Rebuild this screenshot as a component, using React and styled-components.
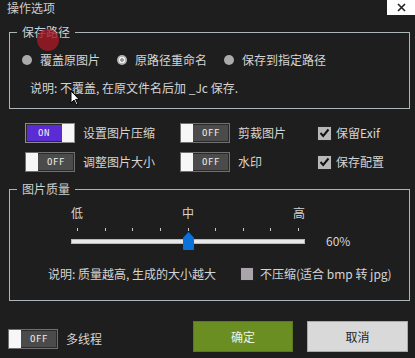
import React from "react";
import styled, { createGlobalStyle } from "styled-components";

// ─── Global ────────────────────────────────────────────────────────────────

const GlobalStyle = createGlobalStyle`
  html, body {
    margin: 0;
    padding: 0;
    background: #1e1e1e;
  }
  body {
    font-family: "Noto Sans CJK SC", "Noto Sans", sans-serif;
    font-size: 12px;
    color: #d4d4d4;
  }
`;

// ─── Frame ─────────────────────────────────────────────────────────────────

const Window = styled.div`
  position: relative;
  width: 415px;
  height: 358px;
  overflow: hidden;
  background: #1e1e1e;
`;

const TitleBar = styled.div`
  display: flex;
  justify-content: space-between;
  align-items: flex-start;
  height: 24px;
`;

const Title = styled.div`
  padding-left: 7px;
  line-height: 16px;
  color: #cdcdcd;
`;

const CloseBtn = styled.div`
  width: 28px;
  height: 15px;
  background: #ffffff;
  display: flex;
  align-items: center;
  justify-content: center;
`;

// ─── Group box ─────────────────────────────────────────────────────────────

const Group = styled.fieldset`
  margin: 0 5px 0 9px;
  padding: 0;
  min-width: 0;
  border: 1px solid #aab5b8;
`;

const Legend = styled.legend`
  margin-left: 7px;
  padding: 0 5px;
  line-height: 16px;
  color: #c9d1d6;
`;

const GroupBody = styled.div`
  padding: ${(p) => p.$pad};
`;

// ─── Radios ────────────────────────────────────────────────────────────────

const RadioRow = styled.div`
  display: flex;
  align-items: center;
  gap: 17px;
  height: 16px;
`;

const RadioItem = styled.label`
  display: flex;
  align-items: center;
  gap: 8px;
  line-height: 16px;
`;

const RadioDot = styled.span`
  width: 10px;
  height: 10px;
  border-radius: 50%;
  background: ${(p) =>
    p.$checked
      ? "radial-gradient(circle, #9a9a9a 0 1.6px, #f2f2f2 2px 3px, #b3b3b3 3.4px)"
      : "#ababab"};
`;

const Note = styled.div`
  line-height: 16px;
  padding-left: ${(p) => p.$indent || 0}px;
`;

// ─── Toggles / checkboxes ──────────────────────────────────────────────────

const Options = styled.div`
  display: grid;
  grid-template-columns: 155px 137px auto;
  grid-auto-rows: 20px;
  row-gap: 9px;
  padding-left: 25px;
  margin: 14px 0 9px;
`;

const Option = styled.div`
  display: flex;
  align-items: center;
  gap: ${(p) => p.$gap || 8}px;
  line-height: 16px;
`;

const Toggle = styled.span`
  box-sizing: border-box;
  width: 50px;
  height: 20px;
  display: flex;
  flex-direction: ${(p) => (p.$on ? "row" : "row-reverse")};
  border: 1px solid ${(p) => (p.$on ? "#8c8c8c" : "#707070")};
  box-shadow: inset 0 0 0 1px #2a2a2a;
  background: ${(p) => (p.$on ? "#5b2bd3" : "#4b4b4b")};
`;

const ToggleText = styled.span`
  flex: 1;
  display: flex;
  align-items: center;
  justify-content: center;
  font-family: "DejaVu Sans Mono", monospace;
  font-size: 9px;
  letter-spacing: 0.5px;
  color: #eeeeee;
`;

const Knob = styled.span`
  width: 12px;
  background: #f7f7f7;
`;

const Check = styled.span`
  box-sizing: border-box;
  width: ${(p) => p.$size || 15}px;
  height: ${(p) => p.$size || 15}px;
  background: ${(p) => p.$bg || "#b8b8b8"};
  border: 1px solid #222;
  display: flex;
  align-items: center;
  justify-content: center;
`;

// ─── Slider ────────────────────────────────────────────────────────────────

const SliderRow = styled.div`
  display: flex;
  padding-left: 61px;
`;

const Slider = styled.div`
  width: 234px;
`;

const ScaleLabels = styled.div`
  display: flex;
  justify-content: space-between;
  line-height: 16px;
`;

const Ticks = styled.div`
  display: flex;
  justify-content: space-between;
  padding: 0 6px;
  margin-top: 7px;
  height: 3px;
`;

const Tick = styled.span`
  width: 1px;
  background: #c8c8c8;
`;

const TrackArea = styled.div`
  position: relative;
  height: 18px;
  margin-top: 1px;
`;

const Track = styled.div`
  position: relative;
  top: 7px;
  height: 3px;
  background: #e8e8e8;
  border: 1px solid #b9b9b9;
`;

const Thumb = styled.span`
  position: absolute;
  top: 0;
  left: 112px;
  width: 11px;
  height: 18px;
  background: #0a72d8;
  border-radius: 1px;
  clip-path: polygon(50% 0, 100% 32%, 100% 100%, 0 100%, 0 32%);
`;

const Percent = styled.span`
  align-self: flex-end;
  margin: 0 0 1px 21px;
  line-height: 16px;
`;

const NoteRow = styled.div`
  display: grid;
  grid-template-columns: 192px auto;
  align-items: center;
  margin-top: 16px;
  padding-left: 38px;
  line-height: 16px;
`;

// ─── Footer ────────────────────────────────────────────────────────────────

const Footer = styled.div`
  display: flex;
  align-items: flex-start;
  justify-content: space-between;
  margin-top: 20px;
  padding: 0 7px 0 8px;
`;

const FooterToggle = styled(Option)`
  margin-top: 8px;
`;

const Buttons = styled.div`
  display: flex;
  gap: 14px;
`;

const Button = styled.button`
  box-sizing: border-box;
  width: ${(p) => p.$w}px;
  height: 31px;
  font-family: inherit;
  font-size: 12px;
  border: 1px solid ${(p) => (p.$primary ? "#5a7a1d" : "#a9a9a9")};
  background: ${(p) => (p.$primary ? "#6b8e23" : "#d9d9d9")};
  color: ${(p) => (p.$primary ? "#eef2e4" : "#1e1e1e")};
  padding: 0;
`;

// ─── Overlays (click marker + cursor) ──────────────────────────────────────

const ClickMark = styled.span`
  position: absolute;
  left: 37px;
  top: 29px;
  width: 22px;
  height: 22px;
  border-radius: 50%;
  background: rgba(168, 24, 36, 0.78);
`;

const Cursor = styled.svg`
  position: absolute;
  left: 70px;
  top: 90px;
`;

// ─── Pieces ────────────────────────────────────────────────────────────────

const Switch = ({ on }) => (
  <Toggle $on={on}>
    <ToggleText>{on ? "ON" : "OFF"}</ToggleText>
    <Knob />
  </Toggle>
);

const CheckMark = () => (
  <svg width="11" height="10" viewBox="0 0 11 10">
    <polyline
      points="1.5,5 4.2,8 9.5,1.5"
      fill="none"
      stroke="#111"
      strokeWidth="2"
    />
  </svg>
);

const App = () => (
  <Window>
    <GlobalStyle />
    <TitleBar>
      <Title>操作选项</Title>
      <CloseBtn>
        <svg width="9" height="9" viewBox="0 0 9 9">
          <path d="M1 1L8 8M8 1L1 8" stroke="#222" strokeWidth="1.6" />
        </svg>
      </CloseBtn>
    </TitleBar>

    <Group>
      <Legend>保存路径</Legend>
      <GroupBody $pad="12px 12px 12px 12px">
        <RadioRow>
          <RadioItem>
            <RadioDot />
            覆盖原图片
          </RadioItem>
          <RadioItem>
            <RadioDot $checked />
            原路径重命名
          </RadioItem>
          <RadioItem>
            <RadioDot />
            保存到指定路径
          </RadioItem>
        </RadioRow>
        <Note $indent={8} style={{ marginTop: 12 }}>
          说明: 不覆盖, 在原文件名后加 _Jc 保存.
        </Note>
      </GroupBody>
    </Group>

    <Options>
      <Option>
        <Switch on />
        设置图片压缩
      </Option>
      <Option>
        <Switch />
        剪裁图片
      </Option>
      <Option $gap={4}>
        <Check>
          <CheckMark />
        </Check>
        保留Exif
      </Option>
      <Option>
        <Switch />
        调整图片大小
      </Option>
      <Option>
        <Switch />
        水印
      </Option>
      <Option $gap={4}>
        <Check>
          <CheckMark />
        </Check>
        保存配置
      </Option>
    </Options>

    <Group>
      <Legend>图片质量</Legend>
      <GroupBody $pad="8px 0 18px 0">
        <SliderRow>
          <Slider>
            <ScaleLabels>
              <span>低</span>
              <span>中</span>
              <span>高</span>
            </ScaleLabels>
            <Ticks>
              {Array.from({ length: 9 }).map((_, i) => (
                <Tick key={i} />
              ))}
            </Ticks>
            <TrackArea>
              <Track />
              <Thumb />
            </TrackArea>
          </Slider>
          <Percent>60%</Percent>
        </SliderRow>
        <NoteRow>
          <span>说明: 质量越高, 生成的大小越大</span>
          <Option $gap={6}>
            <Check $size={14} $bg="#a9a5aa" />
            不压缩(适合 bmp 转 jpg)
          </Option>
        </NoteRow>
      </GroupBody>
    </Group>

    <Footer>
      <FooterToggle>
        <Switch />
        多线程
      </FooterToggle>
      <Buttons>
        <Button $primary $w={100}>
          确定
        </Button>
        <Button $w={101}>取消</Button>
      </Buttons>
    </Footer>

    <ClickMark />
    <Cursor width="10" height="16" viewBox="0 0 10 16">
      <path
        d="M1 1 L1 13 L4 10 L6.5 15 L8 14.3 L5.6 9.4 L9.2 9.4 Z"
        fill="#fff"
        stroke="#000"
        strokeWidth="1"
        strokeLinejoin="round"
      />
    </Cursor>
  </Window>
);

export default App;
